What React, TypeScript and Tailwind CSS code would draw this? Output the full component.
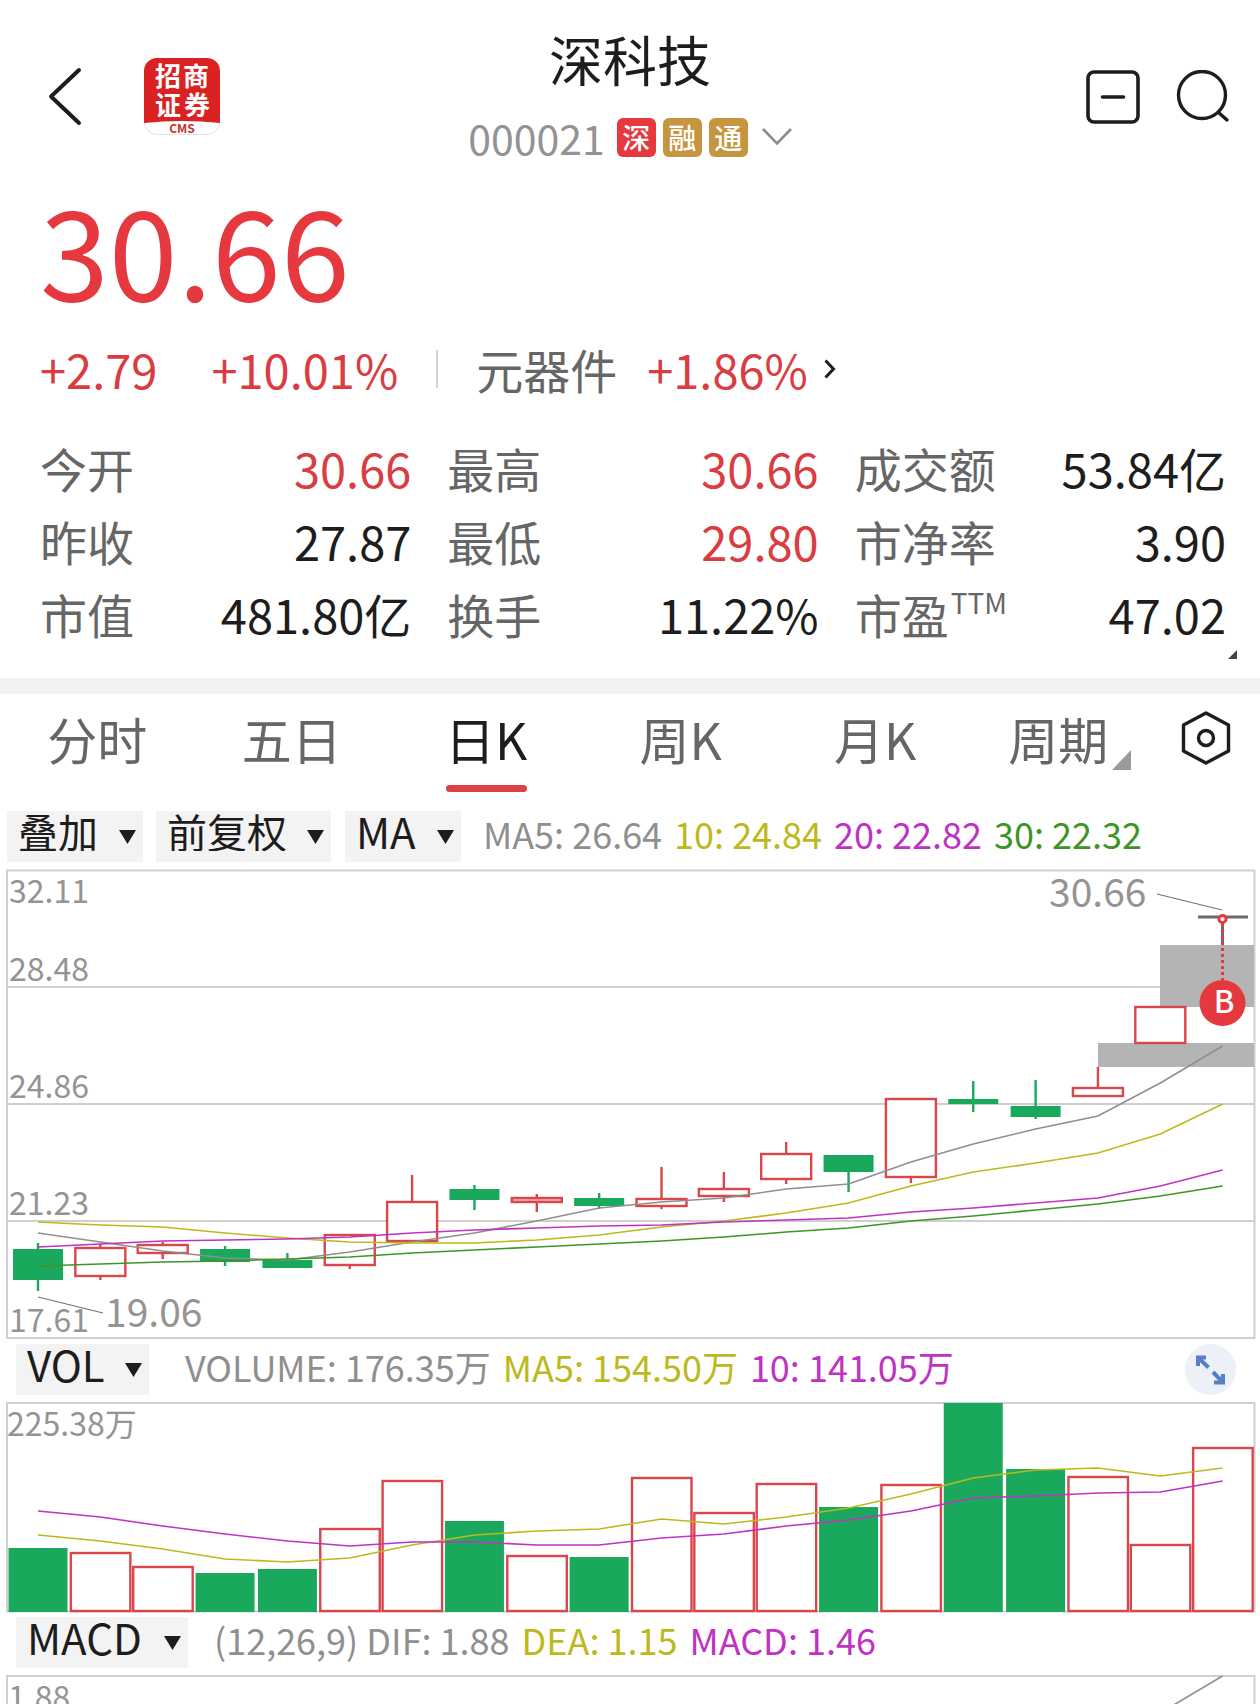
import { useState, type ReactNode } from "react";

type Candle = { up: boolean; high: number; top: number; bottom: number; low: number };

const RED = "#d9464c";
const GREEN = "#1aa85c";
const GRID = "#cfcfcf";
const GREY = "#8f8f8f";
const YELLOW = "#bdb91c";
const MAGENTA = "#c032c4";
const DARK_GREEN = "#3f9427";

// Plot geometry: 20 slots between x=7 and x=1255, y=0 is the top of the frame
const slotX = (i: number) => 38 + i * 62.35;

const CANDLES: Candle[] = [
  { up: false, high: 373, top: 379, bottom: 410, low: 421 },
  { up: true, high: 374, top: 378, bottom: 406, low: 410 },
  { up: true, high: 372, top: 375, bottom: 383, low: 389 },
  { up: false, high: 376, top: 379, bottom: 392, low: 396 },
  { up: false, high: 383, top: 390, bottom: 398, low: 398 },
  { up: true, high: 365, top: 365, bottom: 395, low: 399 },
  { up: true, high: 305, top: 332, bottom: 371, low: 371 },
  { up: false, high: 315, top: 319, bottom: 330, low: 340 },
  { up: true, high: 324, top: 328, bottom: 332, low: 342 },
  { up: false, high: 323, top: 328, bottom: 336, low: 339 },
  { up: true, high: 297, top: 329, bottom: 336, low: 339 },
  { up: true, high: 302, top: 319, bottom: 326, low: 332 },
  { up: true, high: 272, top: 284, bottom: 309, low: 314 },
  { up: false, high: 285, top: 285, bottom: 302, low: 322 },
  { up: true, high: 229, top: 229, bottom: 307, low: 313 },
  { up: false, high: 211, top: 229, bottom: 234, low: 242 },
  { up: false, high: 210, top: 236, bottom: 247, low: 249 },
  { up: true, high: 197, top: 218, bottom: 226, low: 226 },
  { up: true, high: 137, top: 137, bottom: 173, low: 173 },
];

const PRICE_LINES = [
  { color: GREY, ys: [363, 372, 381, 388, 390, 382, 372, 363, 351, 338, 332, 328, 319, 314, 292, 274, 259, 246, 213, 176] },
  { color: YELLOW, ys: [352, 355, 357, 363, 368, 372, 373, 373, 370, 365, 357, 351, 343, 333, 316, 302, 293, 283, 264, 234] },
  { color: MAGENTA, ys: [377, 374, 371, 370, 369, 367, 363, 360, 358, 356, 355, 352, 350, 348, 342, 338, 333, 328, 316, 300] },
  { color: DARK_GREEN, ys: [396, 394, 392, 391, 389, 387, 383, 380, 377, 374, 371, 367, 362, 358, 351, 346, 340, 334, 326, 316] },
];

const PRICE_LABELS = [
  { text: "32.11", y: 33 },
  { text: "28.48", y: 111 },
  { text: "24.86", y: 228 },
  { text: "21.23", y: 345 },
  { text: "17.61", y: 462 },
];

const VOLUME_BARS = [
  { up: false, top: 145 }, { up: true, top: 150 }, { up: true, top: 164 }, { up: false, top: 170 },
  { up: false, top: 166 }, { up: true, top: 126 }, { up: true, top: 78 }, { up: false, top: 118 },
  { up: true, top: 153 }, { up: false, top: 154 }, { up: true, top: 75 }, { up: true, top: 110 },
  { up: true, top: 81 }, { up: false, top: 104 }, { up: true, top: 82 }, { up: false, top: 0 },
  { up: false, top: 66 }, { up: true, top: 74 }, { up: true, top: 142 }, { up: true, top: 45 },
];

const VOLUME_LINES = [
  { color: YELLOW, ys: [132, 138, 146, 156, 159, 155, 142, 132, 128, 126, 116, 121, 114, 105, 91, 75, 67, 65, 73, 65] },
  { color: MAGENTA, ys: [108, 114, 123, 131, 138, 143, 139, 139, 142, 142, 135, 131, 123, 117, 108, 95, 93, 90, 89, 78] },
];

const STATS: { label: string; sup?: string; value: string; red?: boolean }[] = [
  { label: "今开", value: "30.66", red: true },
  { label: "最高", value: "30.66", red: true },
  { label: "成交额", value: "53.84亿" },
  { label: "昨收", value: "27.87" },
  { label: "最低", value: "29.80", red: true },
  { label: "市净率", value: "3.90" },
  { label: "市值", value: "481.80亿" },
  { label: "换手", value: "11.22%" },
  { label: "市盈", sup: "TTM", value: "47.02" },
];

const TABS = ["分时", "五日", "日K", "周K", "月K", "周期"];

const BADGES = [
  { text: "深", className: "bg-[#e5393f]" },
  { text: "融", className: "bg-[#c6953f]" },
  { text: "通", className: "bg-[#c6953f]" },
];

function Lines({ lines }: { lines: { color: string; ys: number[] }[] }) {
  return (
    <>
      {lines.map((line) => (
        <polyline
          key={line.color}
          points={line.ys.map((y, i) => `${slotX(i)},${y}`).join(" ")}
          fill="none"
          stroke={line.color}
          strokeWidth={1.6}
        />
      ))}
    </>
  );
}

function BrokerLogo() {
  return (
    <svg viewBox="0 0 76 77" className="h-[77px] w-[76px] overflow-visible" role="img" aria-label="招商证券">
      <rect x="0.5" y="0.5" width="75" height="76" rx="13" fill="#fff" stroke="#e9dede" />
      <path d="M0 65V13A13 13 0 0 1 13 0H63A13 13 0 0 1 76 13V65Q38 61 0 65Z" fill="#da2223" />
      <g fill="#fff" fontSize="26" fontWeight="700" textAnchor="middle">
        <text x="24" y="28">招</text>
        <text x="52" y="28">商</text>
        <text x="24" y="57">证</text>
        <text x="53" y="57">券</text>
      </g>
      <text x="38" y="75" fill="#c8302c" fontSize="12" fontWeight="700" textAnchor="middle">
        CMS
      </text>
    </svg>
  );
}

function IndicatorSelect({ name, value, className }: { name: string; value: string; className: string }) {
  return (
    <label className={`flex h-[51px] items-center justify-between bg-[#f3f3f3] pr-[7px] pl-[11px] ${className}`}>
      <select
        aria-label={name}
        className="appearance-none bg-transparent pb-3 leading-10 text-[#1d1d1d] outline-none"
      >
        <option>{value}</option>
      </select>
      <svg viewBox="0 0 17 14" className="h-[14px] w-[17px] shrink-0" fill="#1d1d1d">
        <path d="M0 0H17L8.5 14Z" />
      </svg>
    </label>
  );
}

function Readings({ className, children }: { className: string; children: ReactNode }) {
  return (
    <div className={`flex gap-3 pb-2 text-[36px] leading-10 whitespace-nowrap ${className}`}>{children}</div>
  );
}

function PriceChart() {
  return (
    <svg viewBox="0 -2 1260 472" className="block h-auto w-full" role="img" aria-label="日K">
      <rect x="7" y="0.5" width="1247.5" height="467.5" fill="none" stroke={GRID} strokeWidth={2} />
      {[117, 234, 351].map((y) => (
        <line key={y} x1="7" x2="1255" y1={y} y2={y} stroke={GRID} strokeWidth={2} />
      ))}
      <g fill="#949494" fontSize="32">
        {PRICE_LABELS.map((label) => (
          <text key={label.text} x="9" y={label.y}>
            {label.text}
          </text>
        ))}
      </g>

      {/* unfilled price gaps */}
      <rect x="1160" y="75" width="94" height="62" fill="#b4b4b4" />
      <rect x="1098" y="173" width="156" height="24" fill="#b4b4b4" />

      {CANDLES.map((c, i) => {
        const x = slotX(i);
        const color = c.up ? RED : GREEN;
        return (
          <g key={i} stroke={color} strokeWidth={2.4}>
            <line x1={x} x2={x} y1={c.high} y2={c.top} />
            <line x1={x} x2={x} y1={c.bottom} y2={c.low} />
            {c.up ? (
              <rect x={x - 25} y={c.top} width="50" height={c.bottom - c.top} fill={i === 8 ? "#f6b0ae" : "#fff"} />
            ) : (
              <rect x={x - 25} y={c.top} width="50" height={c.bottom - c.top} fill={GREEN} stroke="none" />
            )}
          </g>
        );
      })}
      <Lines lines={PRICE_LINES} />

      <g stroke="#6b6b6b">
        <line x1="1198" x2="1248" y1="47" y2="47" strokeWidth="3" />
        <line x1="1222.5" x2="1222.5" y1="47" y2="75" strokeWidth="3" />
        <line x1="1157" x2="1222" y1="24" y2="40" />
        <line x1="38" x2="103" y1="427" y2="443" />
      </g>
      <g fill="#949494" fontSize="39">
        <text x="1049" y="37">30.66</text>
        <text x="105" y="457">19.06</text>
      </g>

      {/* buy marker */}
      <line x1="1222.5" x2="1222.5" y1="54" y2="112" stroke="#e5393f" strokeWidth="3" strokeDasharray="3 3" />
      <circle cx="1222.5" cy="49" r="3.6" fill="#fff" stroke="#e5393f" strokeWidth="3" />
      <circle cx="1222.5" cy="133" r="23" fill="#e5393f" />
      <text x="1224" y="143" fill="#fff" fontSize="31" fontWeight="500" textAnchor="middle">
        B
      </text>
    </svg>
  );
}

function VolumeChart() {
  return (
    <svg viewBox="0 -2 1260 212" className="block h-auto w-full" role="img" aria-label="VOL">
      <rect x="7" y="0" width="1247.5" height="208.5" fill="none" stroke={GRID} strokeWidth={2} />
      <text x="7" y="33" fill="#949494" fontSize="32">
        225.38万
      </text>
      {VOLUME_BARS.map((bar, i) =>
        bar.up ? (
          <rect
            key={i}
            x={slotX(i) - 29.5}
            y={bar.top}
            width="59.5"
            height={208 - bar.top}
            fill="#fff"
            stroke={RED}
            strokeWidth={2.4}
          />
        ) : (
          <rect key={i} x={slotX(i) - 29.5} y={bar.top} width="59" height={209 - bar.top} fill={GREEN} />
        ),
      )}
      <Lines lines={VOLUME_LINES} />
    </svg>
  );
}

export default function App() {
  const [tab, setTab] = useState("日K");

  return (
    <main className="w-full overflow-hidden bg-white font-['Noto_Sans_CJK_SC',sans-serif] text-[#1d1d1d]">
      <header className="grid grid-cols-[1fr_auto_1fr] items-center pt-5">
        <div className="flex items-center gap-[62px] pl-12">
          <button type="button" aria-label="返回">
            <svg viewBox="0 0 34 60" className="h-[60px] w-[34px]" fill="none" stroke="#1d1d1d" strokeWidth="4" strokeLinecap="round" strokeLinejoin="round">
              <path d="M31 3L3 29.500L31 56" />
            </svg>
          </button>
          <BrokerLogo />
        </div>
        <div className="flex flex-col items-center pb-3">
          <h1 className="text-[54px] leading-[78px]">深科技</h1>
          <div className="mt-[15px] flex h-12 items-center">
            <span className="text-[41px] leading-12 text-[#939393]">000021</span>
            <span className="ml-3 flex gap-[7px]">
              {BADGES.map((badge) => (
                <span
                  key={badge.text}
                  className={`flex size-[39px] items-center justify-center rounded-md text-[28px] leading-8 font-medium text-white ${badge.className}`}
                >
                  {badge.text}
                </span>
              ))}
            </span>
            <button type="button" aria-label="展开" className="ml-[14px]">
              <svg viewBox="0 0 30 18" className="h-[18px] w-[30px]" fill="none" stroke="#8d8d8d" strokeWidth="2.6">
                <path d="M1 1L15 15.500L29 1" />
              </svg>
            </button>
          </div>
        </div>
        <div className="flex items-center justify-end gap-9 pr-[30px]">
          <button type="button" aria-label="移除自选">
            <svg viewBox="0 0 54 54" className="size-[54px]" fill="none" stroke="#1d1d1d" strokeWidth="3.6" strokeLinecap="round">
              <rect x="2" y="2" width="50" height="50" rx="6" />
              <path d="M16.500 27H37.500" />
            </svg>
          </button>
          <button type="button" aria-label="搜索">
            <svg viewBox="0 0 54 54" className="size-[54px]" fill="none" stroke="#1d1d1d" strokeWidth="3.4" strokeLinecap="round">
              <circle cx="26" cy="25" r="23.500" />
              <path d="M42.500 42.500L51 50" />
            </svg>
          </button>
        </div>
      </header>

      <section>
        <p className="pl-10 text-[124px] leading-[148px] text-[#e5393f]">30.66</p>
        <div className="mt-4 flex h-16 items-center pl-10 text-[47px] leading-16 text-[#d93d42]">
          <span>+2.79</span>
          <span className="ml-[54px]">+10.01%</span>
          <span className="ml-[38px] h-[38px] w-[2px] bg-[#d4d4d4]" />
          <a href="#sector" className="ml-[38px] flex items-center">
            <span className="text-[#666]">元器件</span>
            <span className="ml-[30px]">+1.86%</span>
            <svg viewBox="0 0 12 20" className="ml-4 h-5 w-3" fill="none" stroke="#1d1d1d" strokeWidth="3">
              <path d="M1.500 1.500L9.500 10L1.500 18.500" />
            </svg>
          </a>
        </div>

        <dl className="mt-[30px] grid grid-cols-3 gap-x-9 pr-[34px] pl-10 text-[47px] leading-[73px]">
          {STATS.map((stat) => (
            <div key={stat.label} className="flex h-[73px] justify-between">
              <dt className="flex text-[#666]">
                {stat.label}
                {stat.sup && <sup className="static ml-[2px] text-[28px] leading-[50px]">{stat.sup}</sup>}
              </dt>
              <dd className={stat.red ? "text-[#d93d42]" : ""}>{stat.value}</dd>
            </div>
          ))}
        </dl>
        <div className="flex h-7 justify-end pr-[23px]">
          <svg viewBox="0 0 9 9" className="size-[9px]" fill="#444">
            <path d="M9 0V9H0Z" />
          </svg>
        </div>
      </section>

      <div className="h-4 bg-[#f2f2f2]" />

      <nav className="flex pr-[27px] pb-[15px]">
        <div role="tablist" className="flex flex-1">
          {TABS.map((t) => (
            <button
              key={t}
              type="button"
              role="tab"
              aria-selected={t === tab}
              onClick={() => setTab(t)}
              className={`flex flex-1 flex-col items-center text-[50px] leading-[88px] ${t === tab ? "text-[#1d1d1d]" : "text-[#666]"}`}
            >
              <span className="flex items-end">
                {t}
                {t === "周期" && (
                  <svg viewBox="0 0 19 20" className="mb-3 ml-1 h-5 w-[19px]" fill="#9a9a9a">
                    <path d="M19 0V20H0Z" />
                  </svg>
                )}
              </span>
              <span className={`mt-[3px] h-[7px] w-[81px] rounded-full ${t === tab ? "bg-[#dc4146]" : "bg-transparent"}`} />
            </button>
          ))}
        </div>
        <button type="button" aria-label="设置" className="mt-4 ml-3 h-14 w-[54px]">
          <svg viewBox="0 0 54 56" className="h-14 w-[54px]" fill="none" stroke="#1d1d1d" strokeWidth="3.4" strokeLinejoin="round">
            <path d="M27 3L49.500 15V41L27 53L4.500 41V15Z" />
            <circle cx="27" cy="28" r="7.500" />
          </svg>
        </button>
      </nav>

      <div className="mt-1 mb-[6px] flex h-[51px] items-center pl-[7px]">
        <IndicatorSelect name="叠加" value="叠加" className="w-[136px] text-[40px]" />
        <IndicatorSelect name="复权方式" value="前复权" className="ml-[13px] w-[175px] text-[40px]" />
        <IndicatorSelect name="主图指标" value="MA" className="ml-[14px] w-[116px] text-[42px]" />
        <Readings className="ml-[22px]">
          <span className="text-[#8f8f8f]">MA5: 26.64</span>
          <span className="text-[#bdb91c]">10: 24.84</span>
          <span className="text-[#c032c4]">20: 22.82</span>
          <span className="text-[#3f9427]">30: 22.32</span>
        </Readings>
      </div>
      <PriceChart />

      <div className="mt-1 mb-[6px] flex h-[51px] items-center pr-6 pl-4">
        <IndicatorSelect name="副图指标一" value="VOL" className="w-[133px] text-[42px]" />
        <Readings className="ml-9">
          <span className="text-[#8f8f8f]">VOLUME: 176.35万</span>
          <span className="text-[#bdb91c]">MA5: 154.50万</span>
          <span className="text-[#c032c4]">10: 141.05万</span>
        </Readings>
        <button type="button" aria-label="全屏" className="ml-auto">
          <svg viewBox="0 0 51 51" className="size-[51px]">
            <circle cx="25.500" cy="25.500" r="25.500" fill="#ecf1f8" />
            <g fill="none" stroke="#5580c8" strokeWidth="4">
              <path d="M13 22V13.500H21M13 13.500L23.500 23.500" />
              <path d="M38 30V38.500H29M38 38.500L28 28" />
            </g>
          </svg>
        </button>
      </div>
      <VolumeChart />

      <div className="mt-1 mb-[6px] flex h-[51px] items-center pl-4">
        <IndicatorSelect name="副图指标二" value="MACD" className="w-[172px] text-[42px]" />
        <Readings className="ml-[26px]">
          <span className="text-[#8f8f8f]">(12,26,9) DIF: 1.88</span>
          <span className="text-[#bdb91c]">DEA: 1.15</span>
          <span className="text-[#c032c4]">MACD: 1.46</span>
        </Readings>
      </div>
      <svg viewBox="0 -2 1260 30" className="block h-auto w-full" role="img" aria-label="MACD">
        <path d="M7 30V0H1254.500V30" fill="none" stroke={GRID} strokeWidth={2} />
        <text x="8" y="33" fill="#949494" fontSize="32">
          1.88
        </text>
        <path d="M1172 30L1222.500 0" stroke={GREY} strokeWidth={1.6} />
      </svg>
    </main>
  );
}
